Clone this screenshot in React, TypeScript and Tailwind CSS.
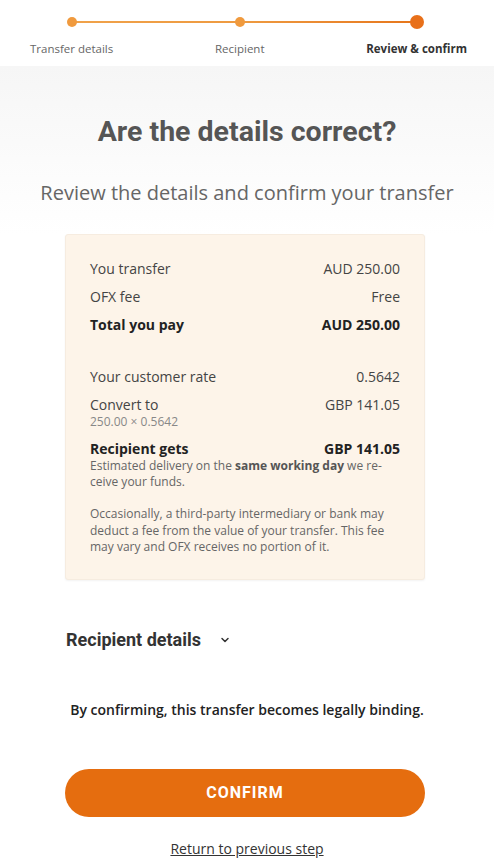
import React from "react";

const body = { fontFamily: "'Open Sans', 'Noto Sans', sans-serif" };
const head = { fontFamily: "Roboto, 'Liberation Sans', sans-serif" };

function Row({ label, value, bold }: { label: string; value: string; bold?: boolean }) {
  return (
    <div className={`flex justify-between items-center h-[28px] text-[14px] ${bold ? "font-bold text-[#222]" : "text-[#444]"}`}>
      <span>{label}</span>
      <span>{value}</span>
    </div>
  );
}

function Step({ label, active, last }: { label: string; active?: boolean; last?: boolean }) {
  return (
    <div className="flex flex-col items-center gap-[12px]">
      <div className="h-[14px] flex items-center">
        <div className={last ? "w-[14px] h-[14px] rounded-full bg-[#e8701a]" : "w-[10px] h-[10px] rounded-full bg-[#f09a3e]"} />
      </div>
      <span className={`text-[11.5px] leading-[16px] whitespace-nowrap ${active ? "font-bold text-[#333]" : "text-[#666]"}`}>{label}</span>
    </div>
  );
}

export default function App() {
  return (
    <div className="w-[494px] min-h-[863px] bg-white" style={body}>
      {/* Stepper */}
      <div className="h-[66px] pt-[15px] pl-[30px] pr-[27px] relative">
        <div className="absolute left-[73px] right-[78px] top-[21px] h-[2px] bg-gradient-to-r from-[#f0a24a] via-[#ee9a40] to-[#e6761a]" />
        <div className="relative flex justify-between">
          <Step label="Transfer details" />
          <Step label="Recipient" />
          <Step label="Review & confirm" active last />
        </div>
      </div>

      {/* Header */}
      <div className="bg-gradient-to-b from-[#f6f6f6] to-white pt-[48px] pb-[27px] flex flex-col items-center">
        <h1 className="text-[28.5px] font-bold text-[#555] leading-[36px]" style={head}>Are the details correct?</h1>
        <p className="mt-[29px] text-[20px] text-[#666] leading-[28px]">Review the details and confirm your transfer</p>
      </div>

      {/* Card */}
      <div className="ml-[65px] w-[360px] bg-[#fdf4e9] rounded-[3px] border border-[#f6ece0] shadow-[0_1px_2px_rgba(0,0,0,0.05)] px-[24px] pt-[19px] pb-[23px]">
        <Row label="You transfer" value="AUD 250.00" />
        <Row label="OFX fee" value="Free" />
        <Row label="Total you pay" value="AUD 250.00" bold />
        <div className="h-[24px]" />
        <Row label="Your customer rate" value="0.5642" />
        <Row label="Convert to" value="GBP 141.05" />
        <div className="text-[12px] text-[#888] leading-[14px] -mt-[3px]">250.00 × 0.5642</div>
        <div className="mt-[5px]">
          <Row label="Recipient gets" value="GBP 141.05" bold />
        </div>
        <p className="text-[12px] text-[#666] leading-[16px] -mt-[4px]">
          Estimated delivery on the <b className="text-[#555]">same working day</b> we re-
          <br />
          ceive your funds.
        </p>
        <p className="text-[12px] text-[#666] leading-[16.5px] mt-[16px]">
          Occasionally, a third-party intermediary or bank may deduct a fee from the value of your transfer. This fee may vary and OFX receives no portion of it.
        </p>
      </div>

      {/* Recipient details */}
      <div className="mx-[66px] mt-[48px] flex items-center gap-[18px] h-[24px]">
        <span className="text-[18px] font-bold text-[#333]" style={head}>Recipient details</span>
        <svg width="12" height="12" viewBox="0 0 24 24" fill="none" stroke="#333" strokeWidth="3" strokeLinecap="round" strokeLinejoin="round">
          <path d="M6 9l6 6 6-6" />
        </svg>
      </div>

      <p className="mt-[48px] text-center text-[14px] leading-[20px] font-semibold text-[#222]">By confirming, this transfer becomes legally binding.</p>

      <div className="ml-[65px] w-[360px] mt-[49px]">
        <button className="w-full h-[48px] rounded-full bg-[#e56d0f] text-white text-[16px] font-bold tracking-[1px]" style={head}>CONFIRM</button>
      </div>

      <div className="mt-[21px] text-center leading-[20px]">
        <a className="text-[14px] text-[#333] underline" href="#">Return to previous step</a>
      </div>
    </div>
  );
}
